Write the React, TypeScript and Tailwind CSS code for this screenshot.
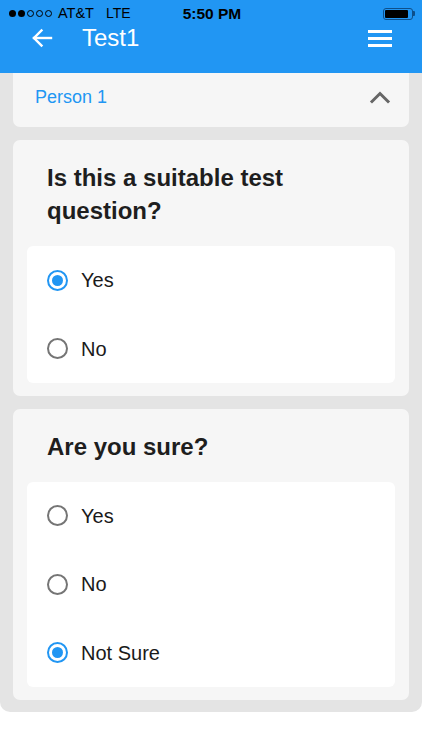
import { useState } from "react";

interface Question {
  id: string;
  title: string;
  options: string[];
  initial: string;
}

const questions: Question[] = [
  {
    id: "q1",
    title: "Is this a suitable test question?",
    options: ["Yes", "No"],
    initial: "Yes",
  },
  {
    id: "q2",
    title: "Are you sure?",
    options: ["Yes", "No", "Not Sure"],
    initial: "Not Sure",
  },
];

function Radio({ checked }: { checked: boolean }) {
  return checked ? (
    <span className="w-[21px] h-[21px] rounded-full border-[2.5px] border-[#2196F3] flex items-center justify-center shrink-0">
      <span className="w-[11px] h-[11px] rounded-full bg-[#2196F3]" />
    </span>
  ) : (
    <span className="w-[21px] h-[21px] rounded-full border-[2.5px] border-[#757575] shrink-0" />
  );
}

function QuestionCard({ q }: { q: Question }) {
  const [value, setValue] = useState<string>(q.initial);

  return (
    <div className="bg-[#f6f6f6] rounded-[7px] pt-[21px] pb-[13px] px-[14px]">
      <h2 className="text-[24px] leading-[33px] font-bold text-[#1e1e1e] px-[20px] mb-[19px]">
        {q.title}
      </h2>
      <div className="bg-white rounded-[6px] flex flex-col">
        {q.options.map((opt) => (
          <label
            key={opt}
            className="h-[68.4px] flex items-center pl-[20px] cursor-pointer"
            onClick={() => setValue(opt)}
          >
            <Radio checked={value === opt} />
            <span className="ml-[13px] text-[20px] text-[#1a1a1a]">{opt}</span>
          </label>
        ))}
      </div>
    </div>
  );
}

function App() {
  return (
    <div className="w-[422px] min-h-[750px] bg-white font-['Liberation_Sans',Arial,sans-serif]">
      <div className="bg-[#2196F3] h-[73px]">
        <div className="h-[27px] flex items-center text-black">
          <div className="flex-1 flex items-center pl-[9px]">
            <div className="flex items-center gap-[2px]">
              <span className="w-[7px] h-[7px] rounded-full bg-black" />
              <span className="w-[7px] h-[7px] rounded-full bg-black" />
              <span className="w-[7px] h-[7px] rounded-full border border-black" />
              <span className="w-[7px] h-[7px] rounded-full border border-black" />
              <span className="w-[7px] h-[7px] rounded-full border border-black" />
            </div>
            <span className="ml-[6px] text-[14.5px]">AT&amp;T</span>
            <span className="ml-[12px] text-[14px]">LTE</span>
          </div>
          <div className="text-[15.5px] font-bold">5:50 PM</div>
          <div className="flex-1 flex justify-end pr-[7px]">
            <div className="flex items-center">
              <div className="w-[30px] h-[12px] rounded-[3px] border border-[#0d4f8a] p-[1px]">
                <div className="w-[23px] h-full bg-black rounded-[1px]" />
              </div>
              <div className="w-[2px] h-[5px] bg-[#0d4f8a] rounded-r-[1px]" />
            </div>
          </div>
        </div>
        <div className="h-[22px] flex items-center pl-[31px] pr-[30px] text-white">
          <svg width="22" height="20" viewBox="0 0 22 20" fill="none" stroke="white" strokeWidth="2.4" strokeLinecap="square">
            <path d="M3 10 H20" />
            <path d="M10.5 2.5 L3 10 L10.5 17.5" />
          </svg>
          <span className="ml-[29px] text-[24px] leading-none">Test1</span>
          <div className="ml-auto flex flex-col gap-[4px]">
            <span className="w-[24px] h-[3px] bg-white" />
            <span className="w-[24px] h-[3px] bg-white" />
            <span className="w-[24px] h-[3px] bg-white" />
          </div>
        </div>
      </div>

      <div className="bg-[#e4e4e4] rounded-b-[10px] px-[13px] pb-[12px] flex flex-col gap-[13px]">
        <div className="h-[54px] bg-[#f6f6f6] rounded-b-[7px] flex items-center pl-[22px] pr-[18px] pb-[6px]">
          <span className="text-[18px] text-[#2196F3]">Person 1</span>
          <svg className="ml-auto" width="22" height="14" viewBox="0 0 22 14" fill="none" stroke="#666" strokeWidth="3" strokeLinecap="square">
            <path d="M3 11.5 L11 3.5 L19 11.5" />
          </svg>
        </div>
        {questions.map((q) => (
          <QuestionCard key={q.id} q={q} />
        ))}
      </div>
    </div>
  );
}

export default App;
